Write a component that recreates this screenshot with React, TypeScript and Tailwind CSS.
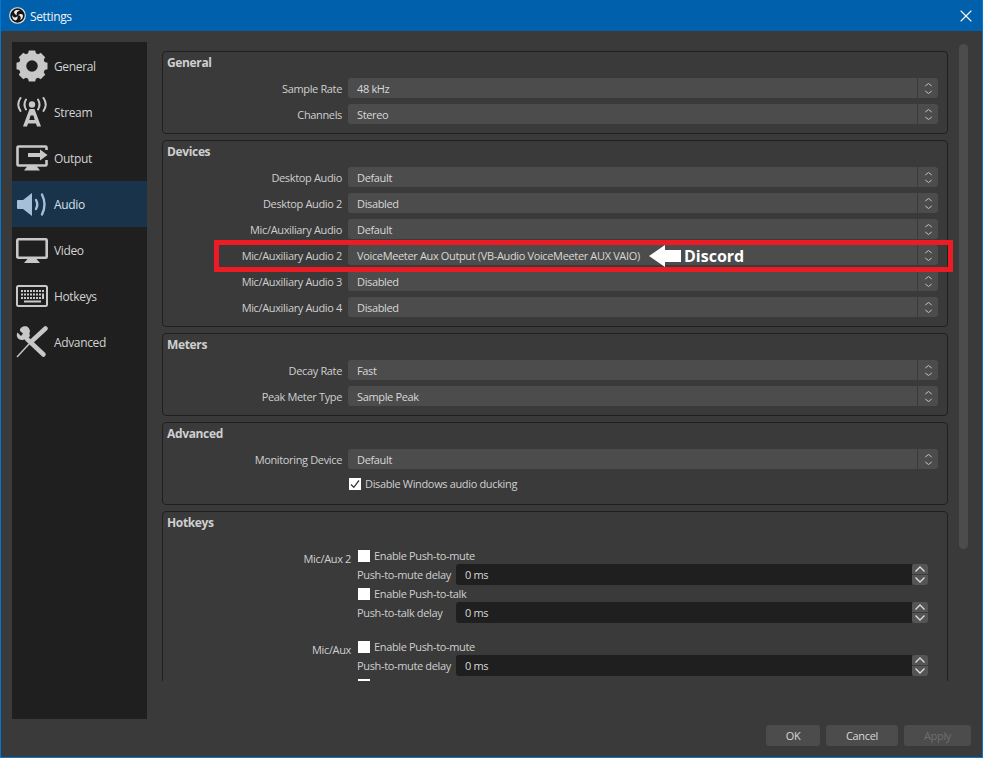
import type { ReactNode } from 'react'
import { X } from 'lucide-react'

const font = "font-['Open_Sans','Noto_Sans',sans-serif]"

function ObsLogo() {
  return (
    <svg width="17" height="17" viewBox="0 0 24 24" className="shrink-0">
      <circle cx="12" cy="12" r="11" fill="#151515" stroke="#e6e6e6" strokeWidth="1.6" />
      {[0, 120, 240].map(r => (
        <path
          key={r}
          transform={`rotate(${r} 12 12)`}
          fill="#ececec"
          d="M7.4 6.2C9.4 3.6 14.4 3.4 16.4 6.4 15 5.3 12.6 5.6 11.4 7.5 10.5 9 10.7 10.4 11.3 11.6 9.2 10.9 6.4 8.6 7.4 6.2Z"
        />
      ))}
    </svg>
  )
}

function GearIcon() {
  return (
    <svg width="32" height="32" viewBox="0 0 32 32" fill="#c8c8c8">
      <circle cx="16" cy="16" r="9.5" fill="none" stroke="#c8c8c8" strokeWidth="7.5" />
      {[0, 45, 90, 135, 180, 225, 270, 315].map(r => (
        <path key={r} transform={`rotate(${r} 16 16)`} d="M12.8 0.5h6.4l1.2 5h-8.8z" />
      ))}
    </svg>
  )
}

function StreamIcon() {
  return (
    <svg width="32" height="30" viewBox="0 0 32 30" fill="#c8c8c8">
      <circle cx="16" cy="7.5" r="3.2" />
      <g fill="none" stroke="#c8c8c8" strokeWidth="2" strokeLinecap="round">
        <path d="M10 2.5Q7 7.5 10 12.5" />
        <path d="M22 2.5Q25 7.5 22 12.5" />
        <path d="M4.5 1Q0 7.5 4.5 14" />
        <path d="M27.5 1Q32 7.5 27.5 14" />
      </g>
      <path
        fillRule="evenodd"
        d="M7 29.5 13.5 12h5L25 29.5h-4l-1-3h-8l-1 3zM14.5 18.5l-1.2 4.500h5.400l-1.200-4.500z"
      />
    </svg>
  )
}

function OutputIcon() {
  return (
    <svg width="32" height="26" viewBox="0 0 32 26" fill="#c8c8c8">
      <path
        d="M30.500 5V2.500a1 1 0 0 0-1-1h-27a1 1 0 0 0-1 1v17a1 1 0 0 0 1 1h27a1 1 0 0 0 1-1V15"
        fill="none"
        stroke="#c8c8c8"
        strokeWidth="2.6"
      />
      <path d="M11.500 21h9l3.500 4.500H8z" />
      <path d="M12 8h12V4.500l7.500 5.500-7.500 5.500V12H12z" />
    </svg>
  )
}

function AudioIcon() {
  return (
    <svg width="30" height="23" viewBox="0 0 30 23">
      <path d="M1 7h5l9-7v23l-9-7H1a1 1 0 0 1-1-1V8a1 1 0 0 1 1-1z" fill="#a5bfd8" />
      <g fill="none" stroke="#a5bfd8" strokeWidth="2.4" strokeLinecap="round">
        <path d="M19 7Q21.500 11.500 19 16" />
        <path d="M25 1.500Q30 11.500 25 21.500" />
      </g>
    </svg>
  )
}

function VideoIcon() {
  return (
    <svg width="32" height="25" viewBox="0 0 32 25" fill="#c8c8c8">
      <rect x="1.3" y="1.3" width="29.4" height="18.4" rx="1" fill="none" stroke="#c8c8c8" strokeWidth="2.6" />
      <path d="M11.500 21h9l3.500 4H8z" />
    </svg>
  )
}

function HotkeysIcon() {
  const top = [5, 8, 11, 14, 17, 20, 23, 26]
  return (
    <svg width="32" height="22" viewBox="0 0 32 22" fill="#c8c8c8">
      <rect x="1" y="1" width="30" height="20" rx="1.5" fill="none" stroke="#c8c8c8" strokeWidth="2" />
      {top.map(x => (
        <rect key={x} x={x} y="5" width="2" height="2" />
      ))}
      {top.slice(0, 7).map(x => (
        <rect key={x} x={x} y="8.5" width="2" height="2" />
      ))}
      {top.slice(0, 7).map(x => (
        <rect key={x} x={x} y="12" width="2" height="2" />
      ))}
      <path d="M26 8.500h2V14h-2z" />
      <rect x="8" y="15.5" width="17" height="2" />
    </svg>
  )
}

function AdvancedIcon() {
  return (
    <svg width="32" height="32" viewBox="0 0 32 32" fill="#c8c8c8">
      <path d="M1 31 13.500 17.500" stroke="#c8c8c8" strokeWidth="1.4" fill="none" />
      <path d="M17 14 29.500 2.500" stroke="#c8c8c8" strokeWidth="4.5" fill="none" strokeLinecap="round" />
      <path d="M11 13 27.500 28.500" stroke="#c8c8c8" strokeWidth="4.5" fill="none" strokeLinecap="round" />
      <path d="M10.500.3C6.500-.3 3.500 2 4 5L7 7.500 5 10 1.500 6.500C-.5 10 2 14.500 6.500 14L11 13l3-3c-.5-1.500-1-2.500 0-4.500C14 4 13 1.500 10.500.3z" />
    </svg>
  )
}

const nav: { label: string; icon: ReactNode; active?: boolean }[] = [
  { label: 'General', icon: <GearIcon /> },
  { label: 'Stream', icon: <StreamIcon /> },
  { label: 'Output', icon: <OutputIcon /> },
  { label: 'Audio', icon: <AudioIcon />, active: true },
  { label: 'Video', icon: <VideoIcon /> },
  { label: 'Hotkeys', icon: <HotkeysIcon /> },
  { label: 'Advanced', icon: <AdvancedIcon /> },
]

function Sidebar() {
  return (
    <div className="w-[135px] shrink-0 bg-[#1f1f1f] py-px text-[12px]">
      {nav.map(item => (
        <div
          key={item.label}
          className={`flex h-[46px] items-center ${item.active ? 'bg-[#19334b] text-[#d6e0ea]' : 'text-[#d2d2d2]'}`}
        >
          <div className="flex w-[42px] shrink-0 justify-center pr-[2px]">{item.icon}</div>
          <span className="pt-[2px]">{item.label}</span>
        </div>
      ))}
    </div>
  )
}

function Chevrons() {
  return (
    <svg width="7" height="11" viewBox="0 0 7 11" fill="none" stroke="#c4c4c4" strokeWidth="1">
      <path d="M.3 3 3.500.5 6.700 3" />
      <path d="M.3 8 3.500 10.500 6.700 8" />
    </svg>
  )
}

function Select({ label, value }: { label: string; value: string }) {
  return (
    <div className="flex h-5 items-center">
      <div className="w-[179px] shrink-0 pt-px text-right text-[#cfcfcf]">{label}</div>
      <div className="ml-[6px] flex h-5 w-[590px] items-center rounded-[3px] bg-[#4c4c4c] text-[#d8d8d8]">
        <div className="flex-1 truncate pt-px pl-[9px]">{value}</div>
        <div className="flex h-full w-[21px] items-center justify-center border-l border-[#3a3a3a]">
          <Chevrons />
        </div>
      </div>
    </div>
  )
}

function Group({ title, children, className }: { title: string; children: ReactNode; className?: string }) {
  return (
    <div className={`w-[786px] rounded-[4px] border border-[#1f1f1f] ${className ?? 'pb-[9px]'}`}>
      <div className="mb-[6px] flex h-5 items-center pt-px pl-1 text-[12px] font-bold text-[#cfcfcf]">{title}</div>
      {children}
    </div>
  )
}

function Check({ label, checked }: { label: string; checked?: boolean }) {
  return (
    <div className="flex h-[17px] items-center text-[#cfcfcf]">
      <div className="flex size-[12px] shrink-0 items-center justify-center bg-white">
        {checked && (
          <svg width="10" height="10" viewBox="0 0 10 10" fill="none" stroke="#3a3a3a" strokeWidth="1.3">
            <path d="M1 5.500 3.800 8.300 9 1.500" />
          </svg>
        )}
      </div>
      <span className="ml-[4px]">{label}</span>
    </div>
  )
}

function SpinInput({ label }: { label: string }) {
  return (
    <div className="flex h-[21px] items-center">
      <div className="w-[99px] shrink-0 whitespace-nowrap text-[#cfcfcf]">{label}</div>
      <div className="flex h-[21px] w-[457px] items-center rounded-l-[3px] bg-[#1f1f1f] pl-[9px] text-[#d8d8d8]">0 ms</div>
      <div className="flex w-[16px] flex-col gap-px">
        <div className="flex h-[10px] items-center justify-center rounded-t-[3px] bg-[#555555]">
          <svg width="10" height="6" viewBox="0 0 10 6" fill="none" stroke="#dcdcdc" strokeWidth="1.3">
            <path d="M.5 5.500 5 1l4.500 4.500" />
          </svg>
        </div>
        <div className="flex h-[10px] items-center justify-center rounded-b-[3px] bg-[#555555]">
          <svg width="10" height="6" viewBox="0 0 10 6" fill="none" stroke="#dcdcdc" strokeWidth="1.3">
            <path d="M.5.500 5 5l4.500-4.500" />
          </svg>
        </div>
      </div>
    </div>
  )
}

function HotkeyBlock({ label, className }: { label: string; className?: string }) {
  return (
    <div className={`flex ${className ?? ''}`}>
      <div className="w-[188px] shrink-0 pt-[4px] text-right text-[#cfcfcf]">{label}</div>
      <div className="ml-[5px] flex w-[572px] flex-col pl-px">
        <div className="pl-px">
          <Check label="Enable Push-to-mute" />
        </div>
        <SpinInput label="Push-to-mute delay" />
        <div className="pl-px">
          <Check label="Enable Push-to-talk" />
        </div>
        <SpinInput label="Push-to-talk delay" />
      </div>
    </div>
  )
}

function Button({ label, className }: { label: string; className: string }) {
  return (
    <div className={`flex h-[21px] items-center justify-center rounded-[3px] bg-[#4c4c4c] ${className}`}>{label}</div>
  )
}

export default function App() {
  return (
    <div className={`${font} relative h-[758px] w-[983px] overflow-hidden border-x border-b border-[#0078d7] bg-[#3a3a3a] text-[11px] leading-4 tracking-[-0.35px]`}>
      <div className="-mx-px flex h-[31px] items-center justify-between bg-[#0060ac] pr-[7px] pl-[9px] text-[12px] text-[#f2f2f2]">
        <div className="flex items-center gap-[4px]">
          <ObsLogo />
          <span className="pt-[2px]">Settings</span>
        </div>
        <X size={20} strokeWidth={1.3} className="text-white" />
      </div>

      <div className="mt-[11px] flex h-[677px] pl-[11px]">
        <Sidebar />
        <div className="ml-[15px] h-[639px] w-[786px] shrink-0 overflow-hidden pt-[9px]">
          <div className="flex flex-col gap-[6px]">
            <Group title="General">
              <div className="flex flex-col gap-[6px]">
                <Select label="Sample Rate" value="48 kHz" />
                <Select label="Channels" value="Stereo" />
              </div>
            </Group>
            <Group title="Devices">
              <div className="flex flex-col gap-[6px]">
                <Select label="Desktop Audio" value="Default" />
                <Select label="Desktop Audio 2" value="Disabled" />
                <Select label="Mic/Auxiliary Audio" value="Default" />
                <Select label="Mic/Auxiliary Audio 2" value="VoiceMeeter Aux Output (VB-Audio VoiceMeeter AUX VAIO)" />
                <Select label="Mic/Auxiliary Audio 3" value="Disabled" />
                <Select label="Mic/Auxiliary Audio 4" value="Disabled" />
              </div>
            </Group>
            <Group title="Meters">
              <div className="flex flex-col gap-[6px]">
                <Select label="Decay Rate" value="Fast" />
                <Select label="Peak Meter Type" value="Sample Peak" />
              </div>
            </Group>
            <Group title="Advanced" className="pb-[12px]">
              <Select label="Monitoring Device" value="Default" />
              <div className="mt-[6px] pl-[186px]">
                <Check label="Disable Windows audio ducking" checked />
              </div>
            </Group>
            <Group title="Hotkeys">
              <div className="pt-[9px]">
                <HotkeyBlock label="Mic/Aux 2" />
                <HotkeyBlock label="Mic/Aux" className="mt-[15px]" />
              </div>
            </Group>
          </div>
        </div>
        <div className="mt-[2px] ml-[11px] h-[505px] w-[9px] rounded-full bg-[#4c4c4c]" />
      </div>

      <div className="mt-[6px] flex justify-end gap-[6px] pr-[11px] text-[#d8d8d8]">
        <Button label="OK" className="w-[54px]" />
        <Button label="Cancel" className="w-[72px]" />
        <Button label="Apply" className="w-[67px] text-[#6e6e6e]" />
      </div>

      {/* annotation drawn over the screenshot */}
      <div className="absolute top-[240px] left-[213px] h-[32px] w-[739px] border-[5px] border-[#ed1c24]" />
      <div className="absolute top-[245px] left-[648px] flex h-[22px] items-center text-white">
        <svg width="32" height="22" viewBox="0 0 32 22" fill="white">
          <path d="M0 11 16 0v5h16v12H16v5z" />
        </svg>
        <span className="ml-[3px] text-[16px] font-bold tracking-normal">Discord</span>
      </div>
    </div>
  )
}
